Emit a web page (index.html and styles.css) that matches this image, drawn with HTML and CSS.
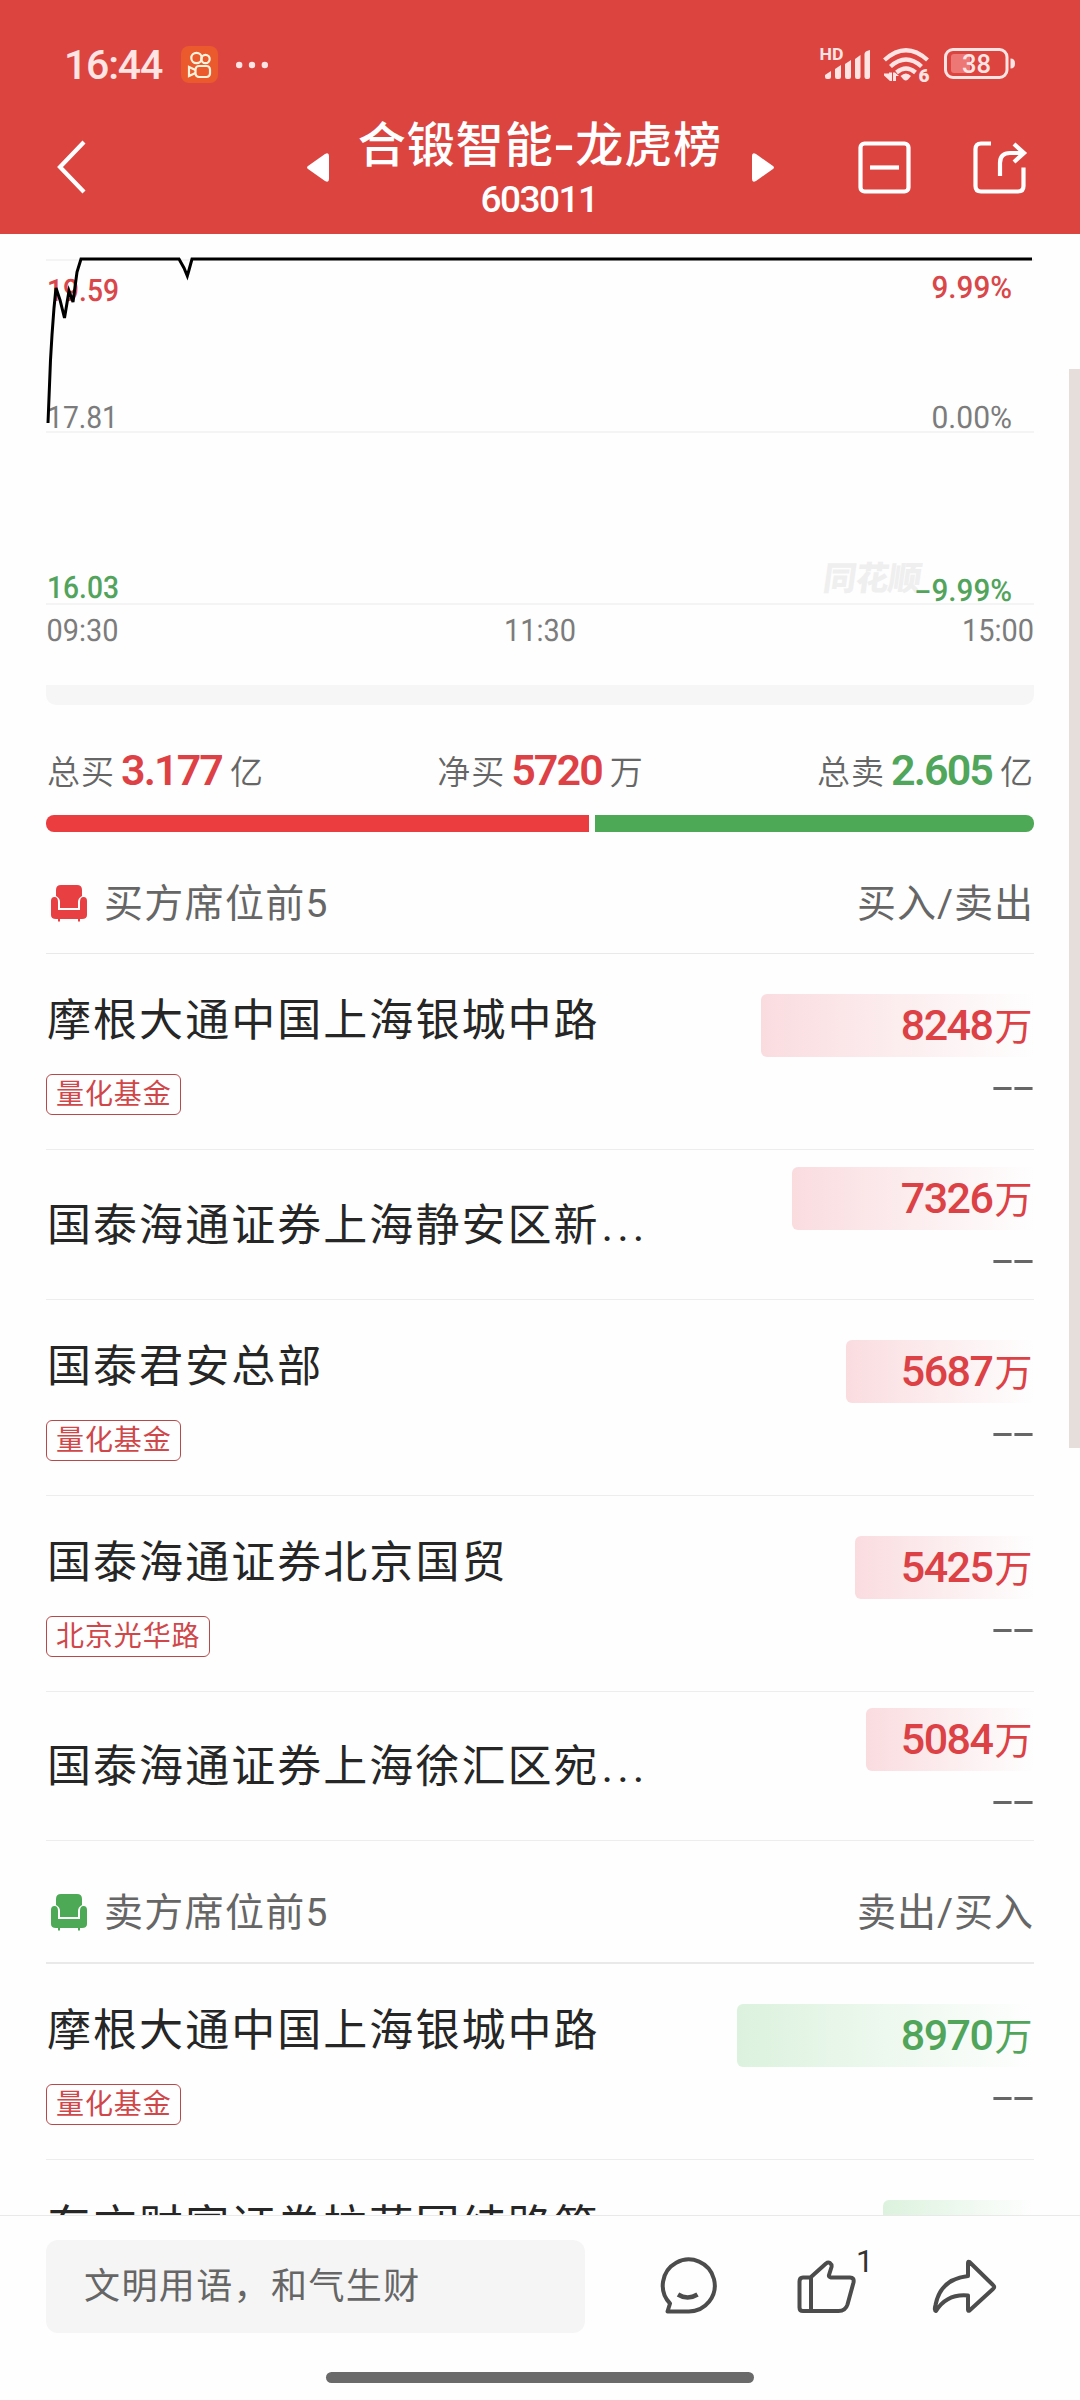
FILE: index.html
```html
<!DOCTYPE html>
<html lang="zh-CN">
<head>
<meta charset="utf-8">
<title>合锻智能-龙虎榜</title>
<link rel="stylesheet" href="styles.css">
</head>
<body>
<svg class="defs" width="0" height="0">
  <symbol id="sofa" viewBox="0 0 38 38">
    <path d="M6 12V6q0-5 5-5h16q5 0 5 5v6q-4 2-4 6v6H10v-6q0-4-4-6z"/>
    <path d="M1 17q0-4 3.500-4T8 18v8h22v-8q0-5 3.500-5t3.500 4v14q0 4-5 4h-2v2.500h-2V35H10v2.500H8V35H6q-5 0-5-4z"/>
  </symbol>
</svg>

<header class="header">
  <div class="status">
    <span class="clock">16:44</span>
    <svg class="app-badge" width="37" height="37" viewBox="0 0 37 37">
      <rect width="37" height="37" rx="8" fill="#ea5a2d"/>
      <g fill="none" stroke="#fff3dc" stroke-width="2.200">
        <circle cx="15.500" cy="12" r="5.200"/><circle cx="24.500" cy="13" r="4.200"/>
        <rect x="14.500" y="20" width="14.500" height="11" rx="3.500"/>
        <path d="M14.500 24L8 21v9l6.500-3"/>
      </g>
    </svg>
    <svg class="dots" width="32" height="8" viewBox="0 0 32 8" fill="#ffe4e3"><circle cx="3.200" cy="4" r="3.200"/><circle cx="16" cy="4" r="3.200"/><circle cx="28.800" cy="4" r="3.200"/></svg>
    <svg class="signals" width="198" height="38" viewBox="818 46 198 38">
      <g fill="#ffe4e3">
        <text x="819.500" y="60" font-size="16.500" font-weight="700" textLength="24" lengthAdjust="spacingAndGlyphs">HD</text>
        <path d="M825 75l6-4v6q0 2-2 2h-2q-2 0-2-2zM835 69l6-4v12q0 2-2 2h-2q-2 0-2-2zM845 64l6-4v17q0 2-2 2h-2q-2 0-2-2zM855 59l5.500-4v22q0 2-2 2h-1.500q-2 0-2-2zM864.500 54q0-3 5.500-4v27q0 2-2 2h-1.500q-2 0-2-2z"/>
        <path d="M900.500 76q5.500-5 10.500 0l-3 3.500q-2.200 2-4.500 0z"/>
        <text x="918.500" y="82" font-size="19" font-weight="900">6</text>
        <path d="M889 72.500h3V81h-2l-6-5.500v-2h5zM893 81h3v-5h3l-4-3.500h-2z"/>
      </g>
      <g fill="none" stroke="#ffe4e3">
        <path d="M884.500 60q21.500-19.500 43 0M890.500 66.500q15.500-14 31 0M896.500 72.500q9.500-8 19 0" stroke-width="4.300"/>
        <rect x="945.500" y="49.500" width="61.500" height="28" rx="7.500" stroke-width="3"/>
      </g>
      <rect x="951" y="54" width="19" height="19" rx="3" fill="#ec7775"/>
      <path d="M1010.500 58.500q4.500 0 4.500 5t-4.500 5z" fill="#ffe4e3"/>
      <text x="962" y="73" font-size="25" fill="#ffe4e3" font-weight="500" textLength="29" lengthAdjust="spacingAndGlyphs">38</text>
    </svg>
  </div>
  <nav class="nav">
    <svg class="back" width="30" height="54" viewBox="0 0 30 54"><path d="M27 2L3 27l24 25" fill="none" stroke="#fff" stroke-width="4.200"/></svg>
    <svg class="prev" width="24" height="31" viewBox="0 0 24 31"><path d="M2 14L19 2q4-2 4 2v23q0 4-4 2L2 17q-2-1.500 0-3z" fill="#fff"/></svg>
    <div class="title">
      <h1>合锻智能<i>-</i>龙虎榜</h1>
      <span>603011</span>
    </div>
    <svg class="next" width="24" height="31" viewBox="0 0 24 31"><path d="M22 14L5 2Q1 0 1 4v23q0 4 4 2l17-12q2-1.500 0-3z" fill="#fff"/></svg>
    <svg class="minus" width="53" height="53" viewBox="0 0 53 53" fill="none" stroke="#fff" stroke-width="4.200"><rect x="2.500" y="2.500" width="48" height="48" rx="4"/><path d="M12 26.500h29"/></svg>
    <svg class="share" width="54" height="53" viewBox="0 0 54 53" fill="none" stroke="#fff" stroke-width="4.200"><path d="M18 2.500H8q-5.500 0-5.500 5.500v37q0 5.500 5.500 5.500h37q5.500 0 5.500-5.500V26.500M27 35V22q0-10 10-10h13M41 3l10 9-10 9"/></svg>
  </nav>
</header>

<main class="content">
  <svg class="chart" width="988" height="451" viewBox="46 234 988 451">
    <g class="grid"><path d="M46 260h988M46 432h988M46 604h988"/></g>
    <text class="watermark" x="822" y="590" textLength="98" transform="translate(822 590) skewX(-8) translate(-822 -590)">同花顺</text>
    <g class="labels" text-rendering="geometricPrecision">
      <text class="up" x="47" y="301" textLength="72" lengthAdjust="spacingAndGlyphs">19.59</text>
      <text x="47" y="428" textLength="71" lengthAdjust="spacingAndGlyphs">17.81</text>
      <text class="down" x="47" y="598" textLength="72" lengthAdjust="spacingAndGlyphs">16.03</text>
      <text class="up" x="931.500" y="298" textLength="80.500" lengthAdjust="spacingAndGlyphs">9.99%</text>
      <text x="931.500" y="428" textLength="80.500" lengthAdjust="spacingAndGlyphs">0.00%</text>
      <text class="down" x="914.500" y="601" textLength="17" lengthAdjust="spacingAndGlyphs">-</text>
      <text class="down" x="931.500" y="601" textLength="80.500" lengthAdjust="spacingAndGlyphs">9.99%</text>
      <text x="46.500" y="641" textLength="72" lengthAdjust="spacingAndGlyphs">09:30</text>
      <text x="504" y="641" textLength="72" lengthAdjust="spacingAndGlyphs">11:30</text>
      <text x="962" y="641" textLength="72" lengthAdjust="spacingAndGlyphs">15:00</text>
    </g>
    <path class="price" d="M48 423L50.500 360 52 335 54 308 56 288 60 300 64.500 318 69 291 73 302 77 272 81 259H179L184 268 187.300 276 189 270 192 259H1032"/>
  </svg>
  <div class="strip"></div>

  <div class="totals">
    <div>总买<b class="up">3.177</b>亿</div>
    <div class="net">净买<b class="up">5720</b>万</div>
    <div>总卖<b class="down">2.605</b>亿</div>
  </div>
  <div class="ratio"><i class="buy"></i><i class="sell"></i></div>

  <section class="seats buy-side">
    <h2><svg width="38" height="38"><use href="#sofa"/></svg><b>买方席位前5</b><span>买入/卖出</span></h2>
    <div class="row">
      <div class="who"><p>摩根大通中国上海银城中路</p><em>量化基金</em></div>
      <div class="sum"><div class="pill" style="width:273px">8248<i>万</i></div><span class="none">--</span></div>
    </div>
    <div class="row plain">
      <div class="who"><p>国泰海通证券上海静安区新<s>...</s></p></div>
      <div class="sum"><div class="pill" style="width:242px">7326<i>万</i></div><span class="none">--</span></div>
    </div>
    <div class="row">
      <div class="who"><p>国泰君安总部</p><em>量化基金</em></div>
      <div class="sum"><div class="pill" style="width:188px">5687<i>万</i></div><span class="none">--</span></div>
    </div>
    <div class="row">
      <div class="who"><p>国泰海通证券北京国贸</p><em>北京光华路</em></div>
      <div class="sum"><div class="pill" style="width:179px">5425<i>万</i></div><span class="none">--</span></div>
    </div>
    <div class="row plain last">
      <div class="who"><p>国泰海通证券上海徐汇区宛<s>...</s></p></div>
      <div class="sum"><div class="pill" style="width:168px">5084<i>万</i></div><span class="none">--</span></div>
    </div>
  </section>

  <section class="seats sell-side">
    <h2><svg width="38" height="38"><use href="#sofa"/></svg><b>卖方席位前5</b><span>卖出/买入</span></h2>
    <div class="row">
      <div class="who"><p>摩根大通中国上海银城中路</p><em>量化基金</em></div>
      <div class="sum"><div class="pill" style="width:297px">8970<i>万</i></div><span class="none">--</span></div>
    </div>
    <div class="row">
      <div class="who"><p>东方财富证券拉萨团结路第<s>...</s></p></div>
      <div class="sum"><div class="pill" style="width:151px"><i>万</i></div></div>
    </div>
  </section>
</main>
<div class="scrollbar"></div>

<footer class="footer">
  <div class="actions">
    <div class="input">文明用语，和气生财</div>
    <svg class="chat" width="58" height="58" viewBox="660 2258 58 58" fill="none" stroke="#4c4c4c" stroke-width="4" stroke-linejoin="round"><path d="M671 2304.500a26 26 0 1 1 18.500 8H668.500z"/><path d="M679 2295.500q9.500 6 19.500 0" stroke-width="4.500"/></svg>
    <svg class="like" width="61" height="58" viewBox="796 2257 61 58" fill="none" stroke="#4c4c4c" stroke-width="4" stroke-linejoin="round"><path d="M811 2277l15-13.500q2-1.500 4-.5 2 1.500 1.500 4l-2.500 8q-.500 2 2 2.500h19q4.500 0 3.500 5l-6 22q-2 6.500-9 6.500H803q-3.500 0-3.500-3.500v-26q0-4 3.500-4h8V2311"/></svg>
    <span class="count">1</span>
    <svg class="forward" width="64" height="58" viewBox="933 2257 64 58" fill="none" stroke="#4c4c4c" stroke-width="4" stroke-linejoin="round"><path d="M968 2276v-13q0-2 1.500-1l23.500 23q2.500 2 0 4l-23.500 21.500q-1.500 1-1.500-1V2295.500q-21-2-32 15.500-2-.500-.500-6 5-26 32.500-29z"/></svg>
  </div>
  <div class="home"></div>
</footer>
</body>
</html>
```
FILE: styles.css
```css
* { box-sizing: border-box; margin: 0; padding: 0; }
html { overflow: hidden; }
body {
  position: relative;
  display: flex;
  flex-direction: column;
  width: 1080px;
  height: 2400px;
  overflow: hidden;
  background: #fefefe;
  color: #666;
  font-family: Roboto, "Noto Sans CJK SC", sans-serif;
}
i, em { font-style: normal; }
svg { flex: none; display: block; overflow: visible; }
.defs { position: absolute; }

.header { flex: none; height: 234px; background: #dc4440; color: #fff; }
.status {
  display: flex;
  align-items: center;
  height: 117px;
  padding: 12px 64px 0 64px;
}
.clock { width: 99px; font-size: 41px; font-weight: 500; letter-spacing: -1.200px; color: #ffe4e3; white-space: nowrap; }
.app-badge { margin-left: 18px; }
.dots { margin-left: 18px; }
.signals { margin-left: auto; }
.nav {
  display: flex;
  align-items: center;
  height: 117px;
  padding: 0 53px 17px 57px;
}
.prev { margin-left: 219px; }
.title {
  align-self: flex-start;
  width: 382px;
  margin: 0 20px 0 19px;
  text-align: center;
  white-space: nowrap;
}
.title h1 { font-size: 48px; font-weight: 500; line-height: 57px; letter-spacing: 1px; }
.title h1 i { display: inline-block; margin: 0 2px; transform: scaleX(1.3); }
.title span { display: block; padding-right: 2px; font-size: 37px; font-weight: 500; line-height: 51px; letter-spacing: -1.500px; }
.minus { margin-left: 83px; }
.share { margin-left: auto; }

.content { flex: 1; min-height: 0; overflow: hidden; padding: 0 46px; }
.grid path { fill: none; stroke: #f4f4f4; stroke-width: 2; }
.price { fill: none; stroke: #000; stroke-width: 3; }
.labels { font-size: 31px; fill: #7c7c7c; }
.labels .up { fill: #d9474a; font-weight: 500; }
.labels .down { fill: #52a45c; font-weight: 500; }
.watermark { font-size: 33px; font-weight: 900; fill: #efefef; }
.strip { height: 20px; border-radius: 0 0 10px 10px; background: #f6f6f6; }

.totals {
  display: flex;
  justify-content: space-between;
  height: 110px;
  padding: 38px 0 0 1px;
  font-size: 33px;
  line-height: 60px;
  letter-spacing: 1px;
  font-weight: 350;
}
.totals b { margin: 0 8px 0 6px; font-size: 43px; font-weight: 600; line-height: 1; letter-spacing: -1.900px; vertical-align: -.500px; }
b.up { color: #de4145; }
b.down { color: #50a65a; }
.ratio { display: flex; gap: 6px; height: 17px; }
.ratio .buy { width: 543px; border-radius: 8px 0 0 8px; background: #eb3d40; }
.ratio .sell { flex: 1; border-radius: 0 8px 8px 0; background: #4da956; }

.seats h2 {
  display: flex;
  align-items: center;
  height: 122px;
  padding: 21px 0 0 4px;
  border-bottom: 1px solid #e9e9e9;
  font-size: 39px;
  font-weight: 400;
  letter-spacing: 1px;
}
.sell-side h2 { height: 123px; padding-top: 20px; border-bottom-width: 2px; }
.seats h2 svg { margin-right: 16px; fill: #e83f42; }
.sell-side h2 svg { fill: #4da956; }
.seats h2 b { font-weight: 400; padding-bottom: 6px; letter-spacing: 1.300px; }
.seats h2 span { margin-left: auto; padding-bottom: 6px; }

.row {
  display: flex;
  justify-content: space-between;
  height: 196px;
  padding-top: 40px;
  border-bottom: 1px solid #ededed;
}
.row.plain { height: 150px; padding-top: 17px; }
.row.last { height: 149px; padding-top: 16px; }
.who { display: flex; flex-direction: column; align-items: flex-start; }
.who p { padding-left: 1px; font-size: 44px; line-height: 55px; letter-spacing: 2.050px; color: #262626; white-space: nowrap; }
.plain .who p { margin-top: 32px; }
.who s { text-decoration: none; letter-spacing: 4px; margin-left: 2px; }
.who em {
  height: 41px;
  margin-top: 25px;
  padding: 0 8px 0 9px;
  border: 1px solid #b8494b;
  border-radius: 6px;
  font-size: 28px;
  line-height: 39px;
  letter-spacing: .900px;
  color: #d0474a;
}
.sum { display: flex; flex-direction: column; align-items: flex-end; }
.pill {
  height: 63px;
  padding-right: 3px;
  border-radius: 6px 0 0 6px;
  background: linear-gradient(90deg, #fadcdf, #fefefe);
  text-align: right;
  font-size: 43px;
  font-weight: 500;
  line-height: 62px;
  letter-spacing: -1.500px;
  color: #dc4145;
  white-space: nowrap;
}
.pill i { font-size: 38px; font-weight: 400; margin-left: 2px; }
.sell-side .pill { background: linear-gradient(90deg, #dcf2de, #fefefe); color: #51a55b; }
.none { margin-top: 6px; font-size: 40px; line-height: 50px; transform: scaleX(1.9); transform-origin: right; }

.scrollbar { position: absolute; top: 369px; right: 0; width: 11px; height: 1079px; background: #e5deda; }

.footer { flex: none; height: 185px; padding: 24px 83px 0 46px; border-top: 1px solid #e9e9e9; background: #fefefe; }
.actions { display: flex; align-items: center; height: 93px; }
.actions svg { margin-bottom: 2px; }
.input {
  width: 539px;
  height: 93px;
  padding-left: 38px;
  border-radius: 12px;
  background: #f5f5f5;
  font-size: 36px;
  line-height: 95px;
  letter-spacing: 1.400px;
}
.chat { margin-left: 74px; }
.like { margin-left: 79px; }
.count { align-self: flex-start; width: 18px; margin: 3px 0 0 -1px; font-size: 31px; line-height: 38px; color: #333; }
.forward { margin-left: auto; }
.home { width: 428px; height: 11px; margin: 39px 0 0 280px; border-radius: 6px; background: #6a6a6a; }
```
